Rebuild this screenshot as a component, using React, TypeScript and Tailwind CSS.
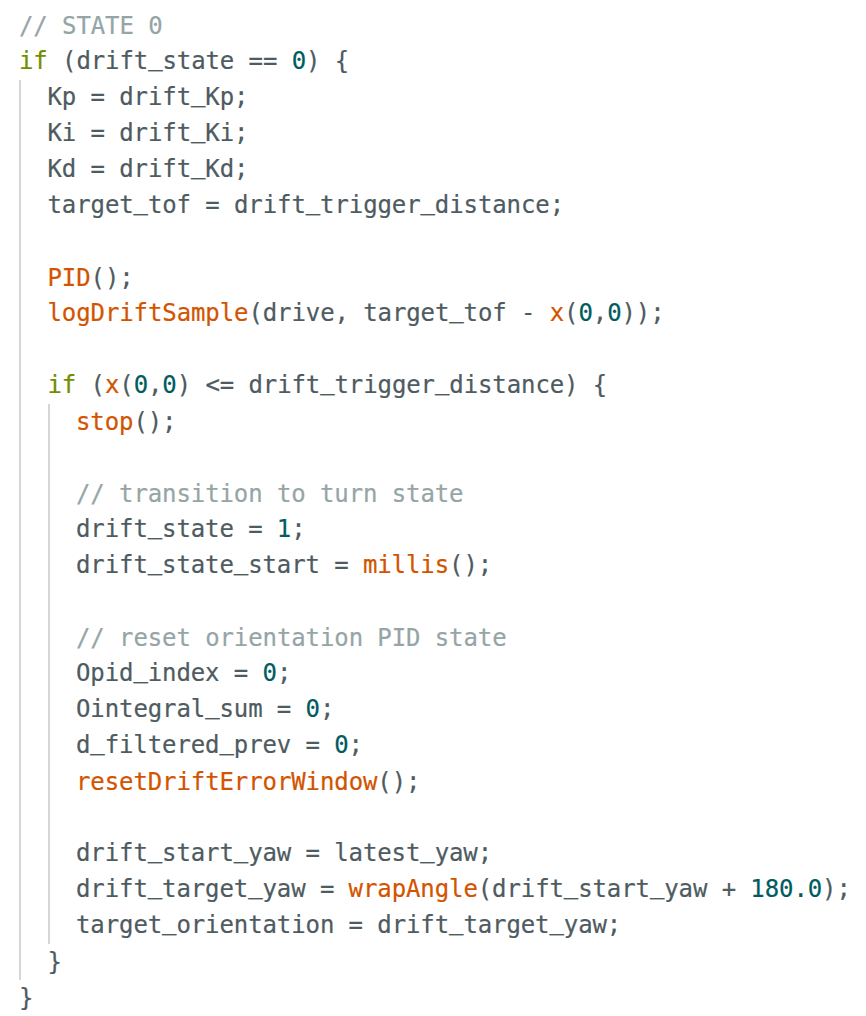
import React from "react";

const C = {
  text: "text-[#4e5b61]",
  kw: "text-[#728e00]",
  fn: "text-[#d35400]",
  num: "text-[#005c5f]",
  cm: "text-[#95a5a6]",
};

type Tok = [string, string?];

function withUnderscores(t: string) {
  return t.split(/(_)/).map((part, i) =>
    part === "_" ? (
      <span key={i} className="font-['Liberation_Mono']">
        _
      </span>
    ) : (
      part
    )
  );
}

function Line({ toks }: { toks: Tok[] }) {
  return (
    <div className="flex h-[36px] items-center whitespace-pre">
      <span className="leading-[30px]">
        {toks.length === 0 ? " " : toks.map(([t, c], i) => (
          <span key={i} className={c ?? C.text}>
            {withUnderscores(t)}
          </span>
        ))}
      </span>
    </div>
  );
}

function Block({ children }: { children: React.ReactNode }) {
  return <div className="border-l-2 border-[#d6d6d6] pl-[26.5px]">{children}</div>;
}

export default function App() {
  return (
    <div
      className="min-h-screen bg-white pl-[19px] pt-[8px] text-[24px] tracking-[-0.1px] [-webkit-text-stroke:0.2px]"
      style={{ fontFamily: '"DejaVu Sans Mono", "Liberation Mono", monospace' }}
    >
      <Line toks={[["// STATE 0", C.cm]]} />
      <Line toks={[["if", C.kw], [" (drift_state == "], ["0", C.num], [") {"]]} />
      <Block>
        <Line toks={[["Kp = drift_Kp;"]]} />
        <Line toks={[["Ki = drift_Ki;"]]} />
        <Line toks={[["Kd = drift_Kd;"]]} />
        <Line toks={[["target_tof = drift_trigger_distance;"]]} />
        <Line toks={[]} />
        <Line toks={[["PID", C.fn], ["();"]]} />
        <Line
          toks={[
            ["logDriftSample", C.fn],
            ["(drive, target_tof - "],
            ["x", C.fn],
            ["("],
            ["0", C.num],
            [","],
            ["0", C.num],
            ["));"],
          ]}
        />
        <Line toks={[]} />
        <Line
          toks={[
            ["if", C.kw],
            [" ("],
            ["x", C.fn],
            ["("],
            ["0", C.num],
            [","],
            ["0", C.num],
            [") <= drift_trigger_distance) {"],
          ]}
        />
        <Block>
          <Line toks={[["stop", C.fn], ["();"]]} />
          <Line toks={[]} />
          <Line toks={[["// transition to turn state", C.cm]]} />
          <Line toks={[["drift_state = "], ["1", C.num], [";"]]} />
          <Line toks={[["drift_state_start = "], ["millis", C.fn], ["();"]]} />
          <Line toks={[]} />
          <Line toks={[["// reset orientation PID state", C.cm]]} />
          <Line toks={[["Opid_index = "], ["0", C.num], [";"]]} />
          <Line toks={[["Ointegral_sum = "], ["0", C.num], [";"]]} />
          <Line toks={[["d_filtered_prev = "], ["0", C.num], [";"]]} />
          <Line toks={[["resetDriftErrorWindow", C.fn], ["();"]]} />
          <Line toks={[]} />
          <Line toks={[["drift_start_yaw = latest_yaw;"]]} />
          <Line
            toks={[
              ["drift_target_yaw = "],
              ["wrapAngle", C.fn],
              ["(drift_start_yaw + "],
              ["180.0", C.num],
              [");"],
            ]}
          />
          <Line toks={[["target_orientation = drift_target_yaw;"]]} />
        </Block>
        <Line toks={[["}"]]} />
      </Block>
      <Line toks={[["}"]]} />
    </div>
  );
}
